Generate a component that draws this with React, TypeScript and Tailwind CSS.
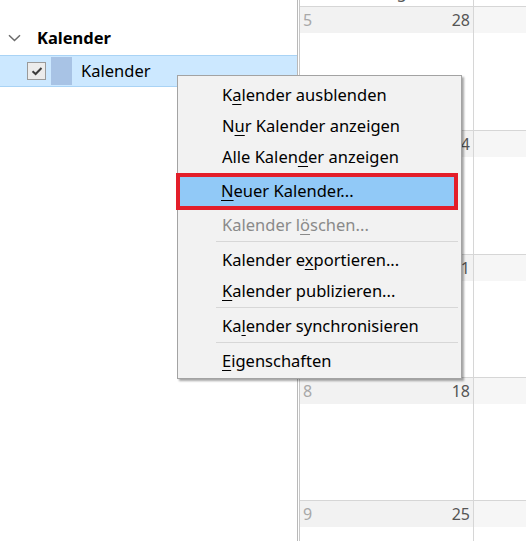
import React from "react";

const U = ({ children }: { children: React.ReactNode }) => (
  <span className="underline decoration-1 underline-offset-[3px]">{children}</span>
);

function Item({ children, disabled }: { children: React.ReactNode; disabled?: boolean }) {
  return (
    <div className={`h-[31px] flex items-center pl-[44px] ${disabled ? "text-[#8a8a8a]" : "text-black"}`}>
      <span>{children}</span>
    </div>
  );
}

function Sep() {
  return (
    <div className="h-[4px]">
      <div className="ml-[38px] mr-[3px] h-px bg-[#d7d7d7]" />
    </div>
  );
}

const weeks = [
  { wk: "5", day: "28", h: "h-[124px]" },
  { wk: "6", day: "4", h: "h-[124px]" },
  { wk: "7", day: "11", h: "h-[123px]" },
  { wk: "8", day: "18", h: "h-[123px]" },
  { wk: "9", day: "25", h: "h-[123px]" },
];

export default function App() {
  return (
    <div
      className="relative w-[526px] h-[541px] overflow-hidden bg-white flex text-[16.5px]"
      style={{ fontFamily: '"Noto Sans", "Open Sans", sans-serif' }}
    >
      {/* Sidebar */}
      <div className="w-[298px] shrink-0 border-r border-[#b9b9b9] pt-[25px]">
        <div className="flex items-center h-[26px]">
          <svg className="ml-[8px] w-[13px] h-[8px]" viewBox="0 0 13 8">
            <path d="M1 1.2 L6.5 6.5 L12 1.2" fill="none" stroke="#6b6b6b" strokeWidth="1.5" />
          </svg>
          <span className="ml-[16px] font-bold text-black">Kalender</span>
        </div>
        <div className="mt-[4px] h-[32px] bg-[#cce8ff] border-y border-[#a9d3f5] flex items-center">
          <div className="ml-[27px] w-[19px] h-[18px] border border-[#9a9a9a] bg-[#ececec] flex items-center justify-center">
            <svg className="w-[12px] h-[10px]" viewBox="0 0 12 10">
              <path d="M1.5 5.2 L4.6 8 L10.5 2" fill="none" stroke="#3c3c3c" strokeWidth="2" />
            </svg>
          </div>
          <div className="ml-[5px] w-[21px] h-[28px] bg-[#a8c3e5]" />
          <span className="ml-[9px] text-black">Kalender</span>
        </div>
      </div>

      {/* gap */}
      <div className="w-[2px] shrink-0 bg-white border-r border-[#c8c8c8]" />

      {/* Calendar */}
      <div className="flex-1 flex flex-col">
        <div className="h-[7px] shrink-0 border-b border-[#d6d6d6] overflow-hidden flex">
          <div className="w-[174px] border-r border-[#d6d6d6] flex justify-center">
            <span className="mt-[-19px] text-[#555] leading-[22px] pr-[20px]">Montag</span>
          </div>
          <div className="flex-1" />
        </div>
        {weeks.map((w, i) => (
          <div key={i} className={`${w.h} shrink-0 border-b border-[#d6d6d6] flex`}>
            <div className="w-[174px] border-r border-[#d6d6d6]">
              <div className="h-[26px] bg-[#f2f2f2] flex items-center justify-between pl-[3px] pr-[3px]">
                <span className="text-[#a8a8a8] text-[16px]">{w.wk}</span>
                <span className="text-[#555555] text-[16px]">{w.day}</span>
              </div>
            </div>
            <div className="flex-1">
              <div className="h-[26px] bg-[#f6f6f6]" />
            </div>
          </div>
        ))}
      </div>

      {/* Context menu */}
      <div className="absolute left-[177px] top-[75px] w-[285px] h-[304px] bg-[#f2f2f2] border border-[#a3a3a3] shadow-[2px_2px_2px_rgba(0,0,0,0.35)] pt-[4px]">
        <Item>K<U>a</U>lender ausblenden</Item>
        <Item>N<U>u</U>r Kalender anzeigen</Item>
        <Item>Alle Kalen<U>d</U>er anzeigen</Item>
        <div className="ml-[-2px] w-[282px] h-[37px] border-[4px] border-[#e31e2a] bg-[#91c9f7] flex items-center pl-[41px] text-black">
          <span><U>N</U>euer Kalender...</span>
        </div>
        <Item disabled>Kalender l<U>ö</U>schen...</Item>
        <Sep />
        <Item>Kalender e<U>x</U>portieren...</Item>
        <Item><U>K</U>alender publizieren...</Item>
        <Sep />
        <Item>Ka<U>l</U>ender synchronisieren</Item>
        <Sep />
        <Item><U>E</U>igenschaften</Item>
      </div>
    </div>
  );
}
